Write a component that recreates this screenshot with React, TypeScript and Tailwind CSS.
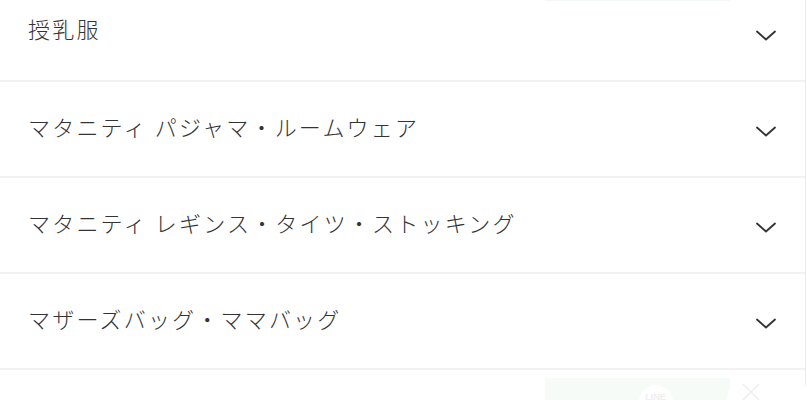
import React from "react";

const items = [
  "授乳服",
  "マタニティ パジャマ・ルームウェア",
  "マタニティ レギンス・タイツ・ストッキング",
  "マザーズバッグ・ママバッグ",
];

const Chevron = () => (
  <svg width="22" height="14" viewBox="0 0 22 14" fill="none" className="shrink-0 mt-[4px]">
    <path d="M2 3.5 L11 11.5 L20 3.5" stroke="#333" strokeWidth="1.8" strokeLinecap="round" strokeLinejoin="round" />
  </svg>
);

const App = () => {
  return (
    <div
      className="relative w-[807px] h-[400px] overflow-hidden bg-white"
      style={{ fontFamily: '"Noto Sans CJK JP", "Noto Sans", sans-serif' }}
    >
      <div className="w-[806px] border-r border-[#ececec] h-full">
        <div className="-mt-[14px]">
          {items.map((label, i) => (
            <div
              key={label}
              className="flex items-center justify-between h-[96px] pl-[28px] pr-[28px] border-b-2 border-[#f2f2f2]"
            >
              <span
                className={
                  "text-[22px] font-light tracking-[2.2px] text-[#333] " +
                  (i === 0 ? "-mt-[10px]" : "-mt-[5px]")
                }
              >
                {label}
              </span>
              <Chevron />
            </div>
          ))}
        </div>
      </div>

      {/* faint edge of floating banner at top */}
      <div className="absolute left-[545px] top-0 w-[185px] h-[1px] bg-[#f3f8f5]" />

      {/* fading floating LINE banner at bottom */}
      <div className="absolute left-[545px] top-[378px] w-[185px] h-[40px] bg-[#f6fbf7] flex justify-center pl-[36px]">
        <div className="mt-[7px] w-[34px] h-[34px] rounded-full bg-white flex items-start justify-center pt-[6px]">
          <span className="text-[9px] font-bold text-[#eeeeee]" style={{ fontFamily: '"Liberation Sans", sans-serif' }}>LINE</span>
        </div>
      </div>
      <div className="absolute left-[727px] top-[375px] w-[50px] h-[50px] rounded-full bg-white">
        <svg width="50" height="50" viewBox="0 0 50 50" className="absolute left-0 top-0">
          <path d="M16 9 L32 25 M32 9 L16 25" stroke="#eeeeee" strokeWidth="1.5" />
        </svg>
      </div>
    </div>
  );
};

export default App;
